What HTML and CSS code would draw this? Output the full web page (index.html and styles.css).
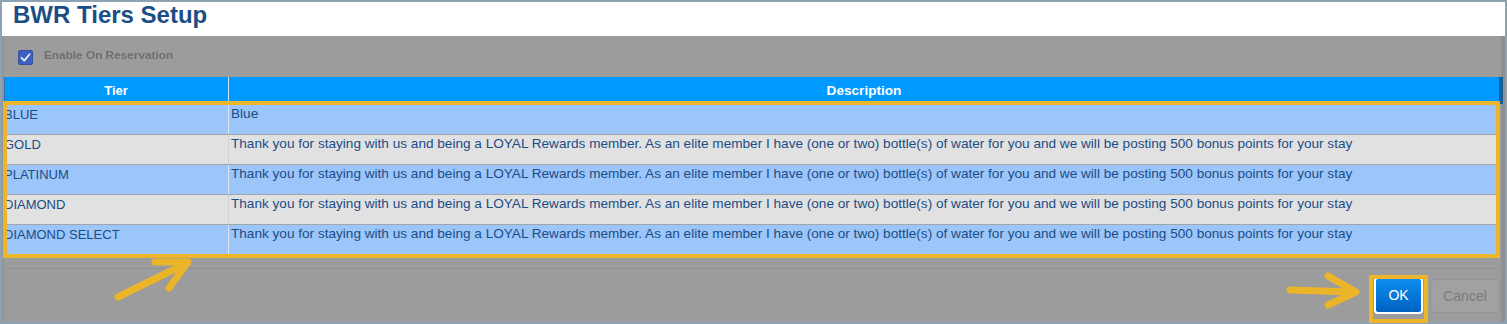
FILE: index.html
```html
<!DOCTYPE html>
<html lang="en">
<head>
  <meta charset="UTF-8" />
  <meta name="viewport" content="width=device-width, initial-scale=1.0"/>
  <title>BWR Tiers Setup</title>
  <link rel="stylesheet" href="styles.css">
</head>
<body>
  <div class="page">
    <div class="dialog">
      <header class="titlebar">
        <h1>BWR Tiers Setup</h1>
      </header>
      <div class="content">
        <div class="option">
          <span class="check">
            <svg width="11" height="11" viewBox="0 0 11 11"><path d="M1.5 5.8 L4.3 8.6 L9.6 2.2" fill="none" stroke="#e8ecf8" stroke-width="1.8" stroke-linecap="round" stroke-linejoin="round"/></svg>
          </span>
          <span class="option-label">Enable On Reservation</span>
        </div>
        <div class="grid">
          <div class="grid-head">
            <div class="cell-tier">Tier</div>
            <div class="cell-desc">Description</div>
          </div>
          <div class="grid-row">
            <div class="cell-tier">BLUE</div>
            <div class="cell-desc">Blue</div>
          </div>
          <div class="grid-row alt">
            <div class="cell-tier">GOLD</div>
            <div class="cell-desc">Thank you for staying with us and being a LOYAL Rewards member. As an elite member I have (one or two) bottle(s) of water for you and we will be posting 500 bonus points for your stay</div>
          </div>
          <div class="grid-row">
            <div class="cell-tier">PLATINUM</div>
            <div class="cell-desc">Thank you for staying with us and being a LOYAL Rewards member. As an elite member I have (one or two) bottle(s) of water for you and we will be posting 500 bonus points for your stay</div>
          </div>
          <div class="grid-row alt">
            <div class="cell-tier">DIAMOND</div>
            <div class="cell-desc">Thank you for staying with us and being a LOYAL Rewards member. As an elite member I have (one or two) bottle(s) of water for you and we will be posting 500 bonus points for your stay</div>
          </div>
          <div class="grid-row">
            <div class="cell-tier">DIAMOND SELECT</div>
            <div class="cell-desc">Thank you for staying with us and being a LOYAL Rewards member. As an elite member I have (one or two) bottle(s) of water for you and we will be posting 500 bonus points for your stay</div>
          </div>
        </div>
        <div class="footer">
          <button type="button" class="btn btn-ok">OK</button>
          <button type="button" class="btn btn-cancel">Cancel</button>
        </div>
      </div>
    </div>

    <!-- annotations drawn over the dialog -->
    <div class="mark mark-rows"></div>
    <div class="mark mark-ok"></div>
    <svg class="arrows" width="1507" height="324" viewBox="0 0 1507 324">
      <g fill="none" stroke="#ebb52a" stroke-width="7" stroke-linecap="round" stroke-linejoin="round">
        <path d="M118 297 L187 263"/>
        <path d="M155 262 L188 262 L169 288"/>
        <path d="M1290 290 L1354 292"/>
        <path d="M1328 276 L1356 292 L1328 305"/>
      </g>
    </svg>
  </div>
</body>
</html>
```

FILE: styles.css
```css
body {
  margin: 0;
  padding: 0;
  background: #8ea3b2;
  font-family: "Liberation Sans", Arial, sans-serif;
}

.page {
  position: relative;
  width: 1507px;
  height: 324px;
  overflow: hidden;
}

.dialog {
  position: absolute;
  top: 2px;
  left: 2px;
  width: 1503px;
  height: 320px;
  display: flex;
  flex-direction: column;
}

.titlebar {
  height: 34px;
  background: #ffffff;
  padding-left: 11px;
}

.titlebar h1 {
  margin: 0;
  font-size: 24px;
  line-height: 26px;
  font-weight: bold;
  color: #1d4d85;
}

.content {
  flex: 1;
  background: #9c9c9c;
  box-shadow: inset -4px 0 0 #8e9194, inset 2px 0 0 #8f969b;
  display: flex;
  flex-direction: column;
}

.option {
  height: 41px;
  display: flex;
  align-items: center;
  padding-left: 16px;
  gap: 11px;
  padding-bottom: 3px;
  box-sizing: border-box;
}

.check {
  width: 15px;
  height: 15px;
  background: #3d5fbf;
  border: 1px solid #34519f;
  border-radius: 2px;
  box-sizing: border-box;
  display: flex;
  align-items: center;
  justify-content: center;
  margin-top: 4px;
}

.option-label {
  font-size: 11.8px;
  font-weight: bold;
  color: #6e6e6e;
  filter: blur(0.6px);
}

.grid {
  margin: 0 2px;
  font-size: 13.6px;
}

.grid-head {
  display: grid;
  grid-template-columns: 224px 1fr;
  height: 27px;
  background: #0099ff;
  box-shadow: inset -4px 0 0 #1a5e96, inset 1px 0 0 #2a73b8;
  color: #ffffff;
  font-weight: bold;
  line-height: 27px;
  text-align: center;
}

.grid-head .cell-tier {
  font-size: 13px;
}

.grid-head .cell-desc {
  border-left: 1px solid #cfe6fb;
  padding-right: 4px;
}

.grid-row {
  display: grid;
  grid-template-columns: 224px 1fr;
  height: 30px;
  box-sizing: border-box;
  margin-right: 6px;
  background: #9cc5fa;
  border-top: 1px solid #a2a6ac;
  color: #1b4d86;
  line-height: 15px;
}

.grid-head + .grid-row {
  border-top: none;
}

.grid-row.alt {
  background: #e1e1e1;
}

.grid-row .cell-tier {
  font-size: 13px;
  padding-top: 3px;
  white-space: nowrap;
  overflow: hidden;
}

.grid-row .cell-desc {
  border-left: 1px solid #d9e5f2;
  padding: 2px 0 0 2px;
  white-space: nowrap;
  overflow: hidden;
}

.grid-row.alt .cell-desc {
  border-left-color: #d2d2d2;
}

.grid-row + .grid-row .cell-tier {
  padding-top: 2px;
}

.grid-row + .grid-row .cell-desc {
  padding-top: 1px;
}

.footer {
  flex: 1;
  margin-top: 14px;
  border-top: 1px solid #929292;
  display: flex;
  justify-content: flex-end;
  align-items: center;
  gap: 7px;
  padding-right: 5px;
  padding-bottom: 2px;
}

.btn {
  font-family: "Liberation Sans", Arial, sans-serif;
  font-size: 14px;
  border-radius: 4px;
  cursor: pointer;
  padding: 0;
}

.btn-ok {
  width: 49px;
  height: 37px;
  color: #ffffff;
  background: linear-gradient(#0b8ded, #0062c3);
  border: 2px solid #ffffff;
  margin-top: 1px;
}

.btn-cancel {
  width: 70px;
  height: 34px;
  color: #7a7a7a;
  background: #a1a1a1;
  border: 1px solid #939393;
  margin-top: 2px;
}

.mark {
  position: absolute;
  border: 4px solid #ecb52b;
  box-sizing: border-box;
}

.mark-rows {
  left: 3px;
  top: 101px;
  width: 1497px;
  height: 157px;
}

.mark-ok {
  left: 1369px;
  top: 275px;
  width: 59px;
  height: 48px;
}

.arrows {
  position: absolute;
  left: 0;
  top: 0;
  pointer-events: none;
}
```
